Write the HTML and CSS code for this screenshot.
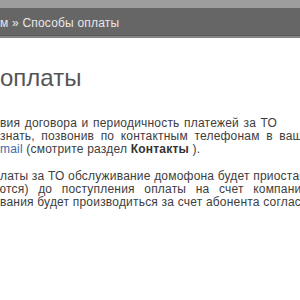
FILE: index.html
```html
<!DOCTYPE html>
<html lang="ru">

<head>
    <meta charset="UTF-8">
    <title>Способы оплаты</title>
    <link rel="stylesheet" href="styles.css">
</head>

<body>

    <header class="shapka">
        <div class="polosa"></div>
        <nav class="kroshki">м &raquo; Способы оплаты</nav>
    </header>

    <main class="soderzhanie">
        <h1>оплаты</h1>

        <p>
            <span class="stroka pervaya">вия договора и периодичность платежей за ТО</span>
            <span class="stroka vtoraya">знать, позвонив по контактным телефонам в вашем</span>
            <span class="stroka"><a href="#">mail</a> (смотрите раздел <b>Контакты</b> ).</span>
        </p>

        <p>
            <span class="stroka">латы за ТО обслуживание домофона будет приостановлено</span>
            <span class="stroka shiroko obrez">ются) до поступления оплаты на счет компании</span>
            <span class="stroka">вания будет производиться за счет абонента согласно</span>
        </p>
    </main>

</body>

</html>
```

FILE: styles.css
```css
body {
    margin: 0;
    background: #fff;
    font-family: "Liberation Sans", Arial, sans-serif;
    overflow: hidden;
}

.polosa {
    height: 8px;
    background: #9d9d9d;
}

.kroshki {
    height: 27px;
    padding-top: 1px;
    display: flex;
    align-items: center;
    background: #666;
    color: #e8e8e8;
    font-size: 12px;
    letter-spacing: 0.2px;
    box-shadow: inset 0 -1px 0 #595959;
    border-bottom: 2px solid #858585;
    white-space: nowrap;
}

h1 {
    margin: 26px 0 0;
    font-size: 24px;
    line-height: 28px;
    font-weight: normal;
    color: #555;
}

p {
    margin: 25px 0 14px;
    font-size: 12px;
    letter-spacing: 0.2px;
    line-height: 13px;
    color: #3d3d3d;
}

p + p {
    margin-top: 0;
}

.stroka {
    display: block;
    white-space: nowrap;
}

.pervaya {
    word-spacing: 1px;
}

.vtoraya {
    word-spacing: 3px;
}

.shiroko {
    word-spacing: 6px;
}

.obrez {
    text-indent: -3px;
}

a {
    color: #3f68a8;
    text-decoration: none;
}

b {
    color: #333;
}
```
